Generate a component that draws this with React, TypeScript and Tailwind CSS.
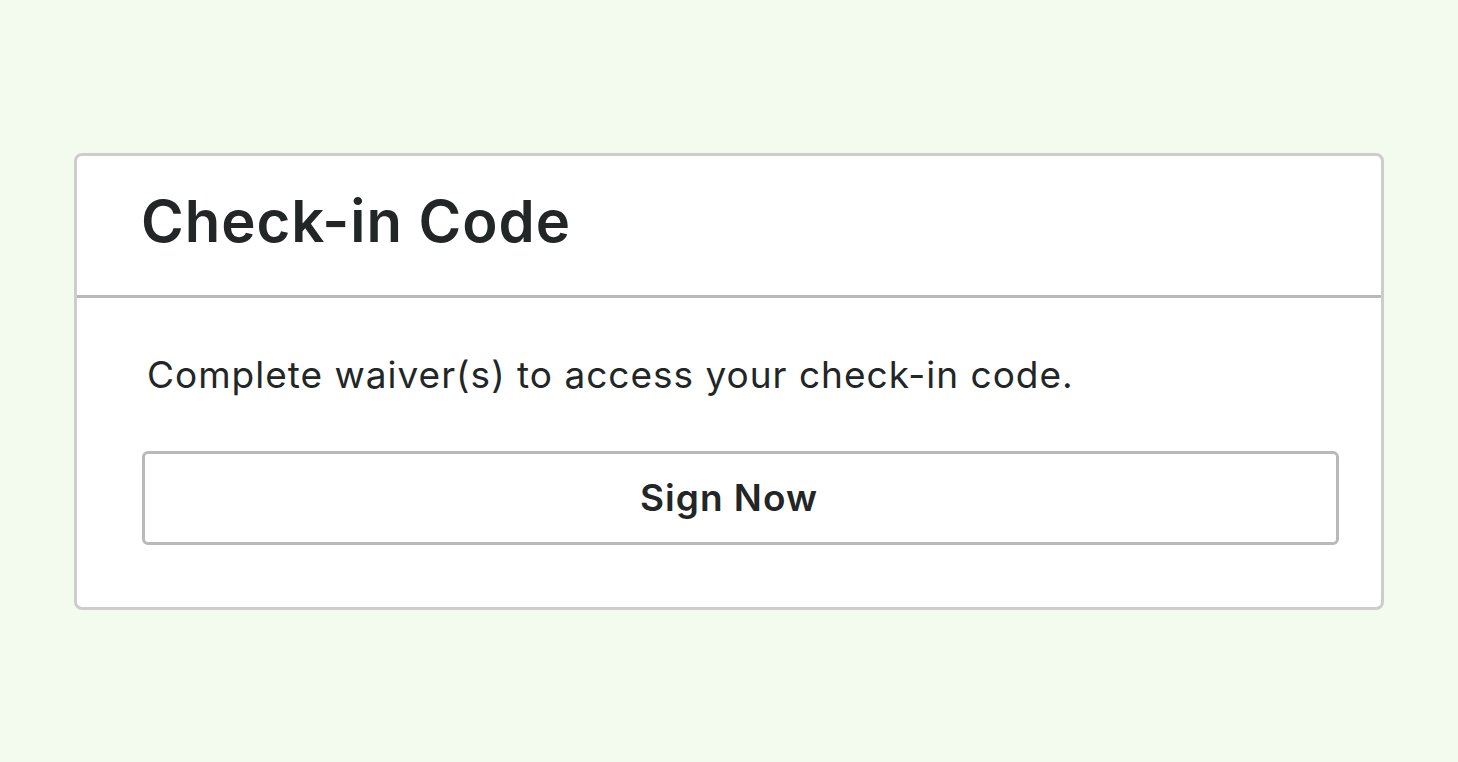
import React from 'react';

const App = () => (
  <div className="min-h-screen w-full bg-[#f3faee] flex items-center justify-center px-[74px]" style={{ fontFamily: 'Inter, "Liberation Sans", sans-serif' }}>
    <div className="w-full bg-white border-[3px] border-[#cdcdcd] rounded-[8px] overflow-hidden">
      <div className="h-[142px] border-b-[3px] border-[#b9b9b9] flex items-center px-[64px] pb-[8px]">
        <h1 className="text-[58px] font-semibold text-[#222626] leading-none tracking-[1px]">Check-in Code</h1>
      </div>
      <div className="pl-[65px] pr-[42px] pt-[58px] pb-[62px]">
        <p className="text-[37px] text-[#222626] leading-none ml-[5px] tracking-[1px]">Complete waiver(s) to access your check-in code.</p>
        <button className="mt-[58px] w-full h-[94px] border-[3px] border-[#b9b9b9] rounded-[6px] bg-white text-[37px] font-semibold text-[#222626] tracking-[1px] flex items-center justify-center pr-[23px]">
          Sign Now
        </button>
      </div>
    </div>
  </div>
);

export default App;
